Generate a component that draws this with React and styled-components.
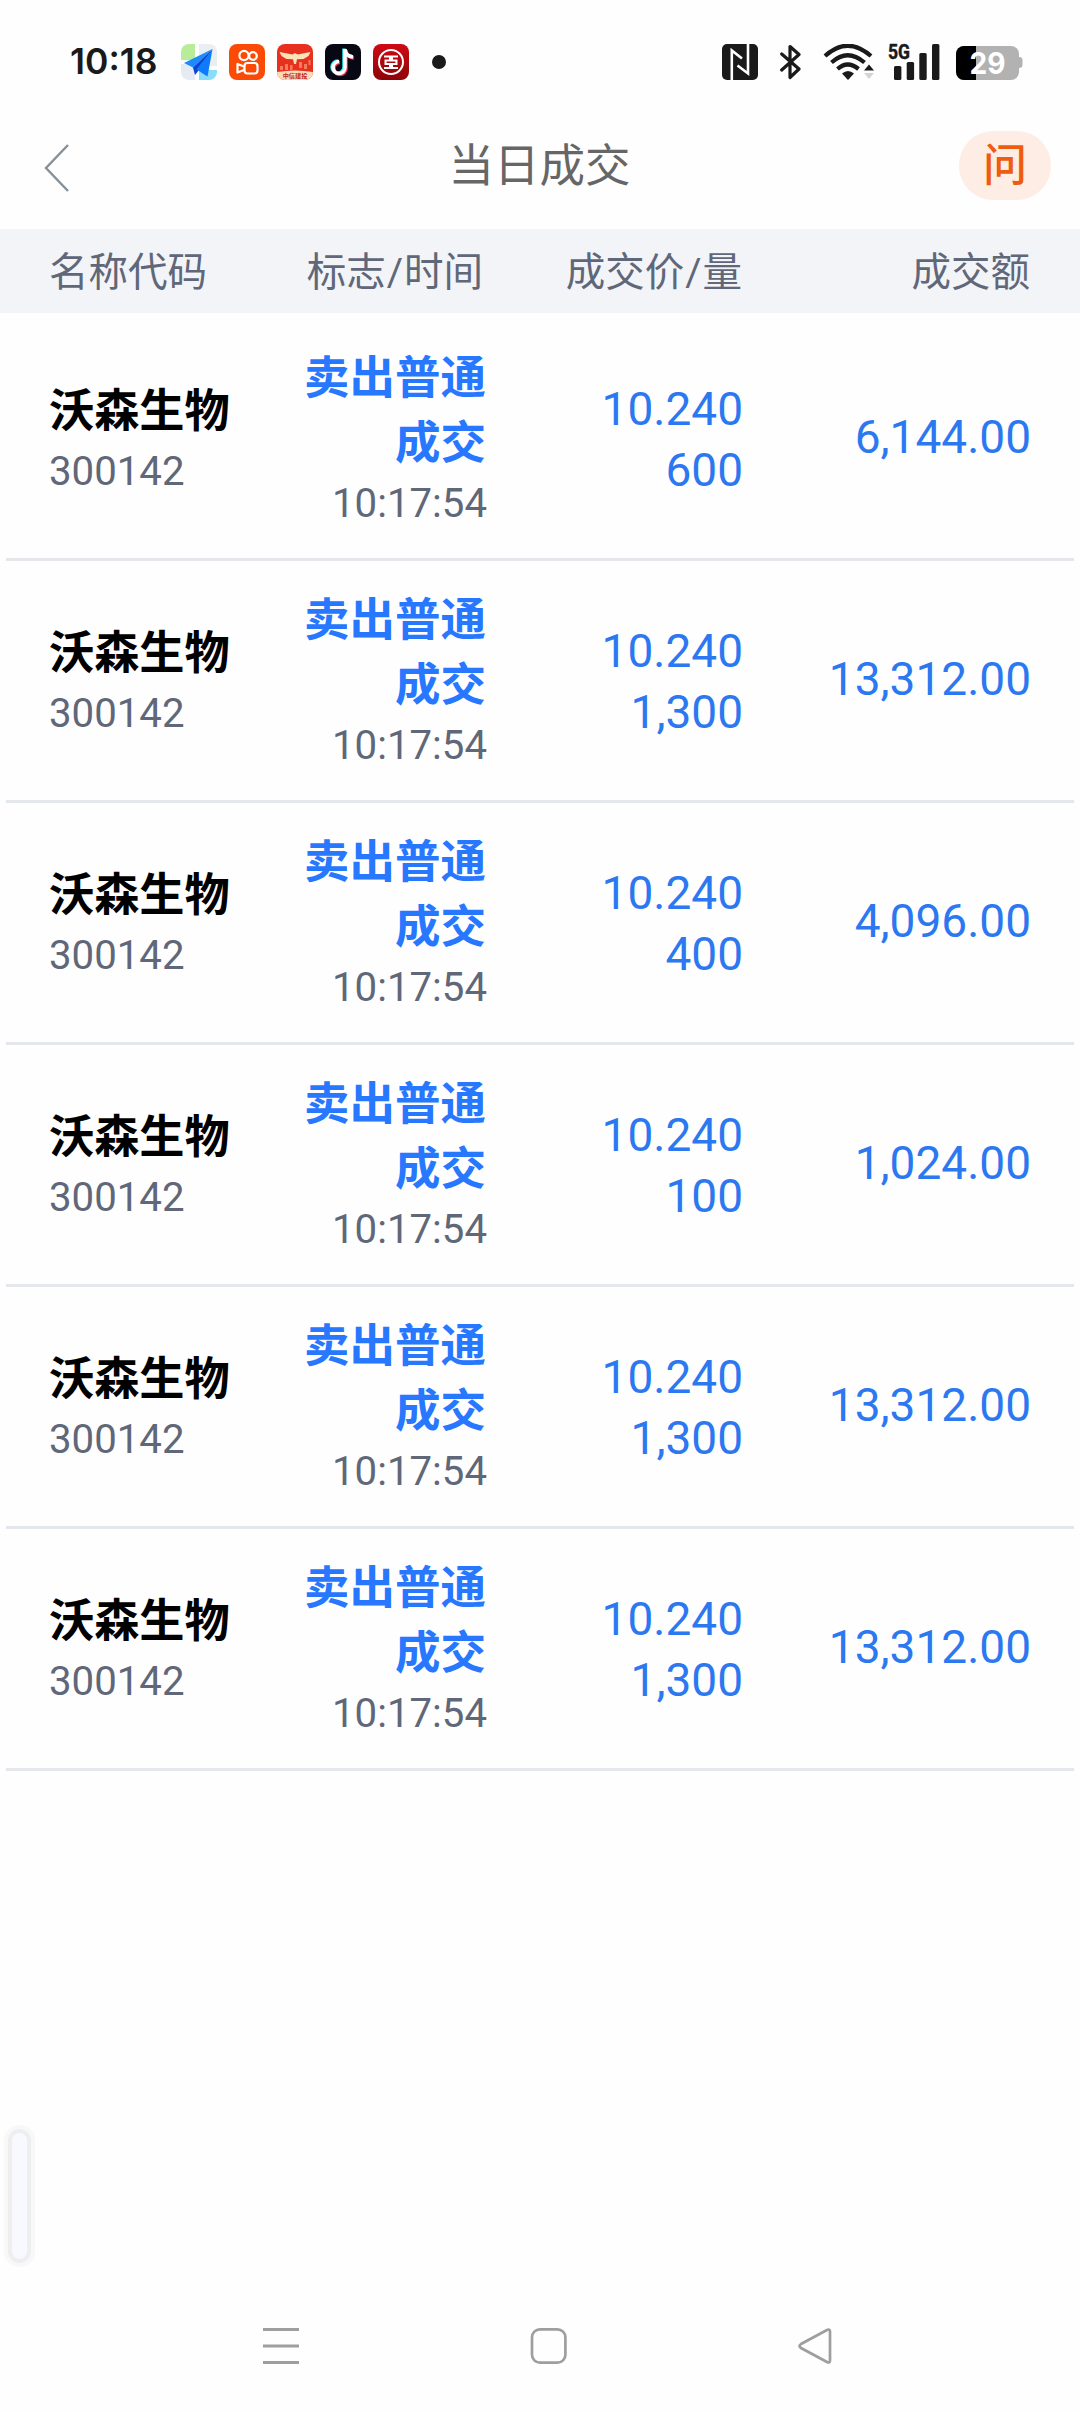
import styled, { createGlobalStyle, css } from "styled-components";

const GlobalStyle = createGlobalStyle`
  * {
    box-sizing: border-box;
  }

  body {
    margin: 0;
    background-color: #fefefe;
    font-family: Roboto, "Noto Sans CJK SC", sans-serif;
  }

  svg {
    display: block;
    flex-shrink: 0;
  }
`;

const Screen = styled.div`
  position: relative;
  display: flex;
  flex-direction: column;
  width: 1080px;
  height: 2412px;
  overflow: hidden;
  background-color: #fefefe;
`;

const StatusBar = styled.div`
  display: flex;
  align-items: center;
  height: 102px;
  padding: 22px 57px 0 70px;
`;

const Clock = styled.span`
  width: 111px;
  color: #1a1a1a;
  font-family: Inter, sans-serif;
  font-size: 35.5px;
  font-weight: 600;
  line-height: 36px;
  white-space: nowrap;
`;

const AppIcons = styled.div`
  display: flex;
  align-items: center;
  gap: 12px;
`;

const Dot = styled.span`
  width: 14px;
  height: 14px;
  margin-left: 11px;
  border-radius: 50%;
  background-color: #1a1a1a;
`;

const SystemIcons = styled.div`
  display: flex;
  align-items: center;
  margin-left: auto;
`;

const SystemIcon = styled.svg`
  margin-right: ${({ $gap }) => $gap || 0}px;
`;

const TitleBar = styled.header`
  display: grid;
  grid-template-columns: 200px 1fr 200px;
  align-items: center;
  height: 127px;
  padding: 0 29px 0 44px;
`;

const BackIcon = styled.svg`
  margin-top: 5px;
`;

const Title = styled.h1`
  margin: 0 0 0 -16px;
  padding-top: 3px;
  color: #666;
  font-size: 45.5px;
  font-weight: 400;
  line-height: 60px;
  text-align: center;
`;

const AskButton = styled.button`
  justify-self: end;
  width: 92px;
  height: 69px;
  padding: 0;
  border: none;
  border-radius: 34px;
  background-color: #feede5;
  color: #ee5c0f;
  font-family: inherit;
  font-size: 44px;
  font-weight: 500;
  line-height: 68px;
  text-align: center;
`;

const columns = css`
  display: grid;
  align-items: center;
`;

const TableHead = styled.div`
  ${columns}
  grid-template-columns: 234px 200px 259px 288px;
  height: 84px;
  padding: 3px 50px 0 49px;
  background-color: #f2f4f8;
  color: #5f6779;
  font-size: 39.5px;
  line-height: 81px;
`;

const HeadCell = styled.span`
  text-align: ${({ $left }) => ($left ? "left" : "right")};
  white-space: nowrap;
`;

const Slash = styled.span`
  margin: 0 1px;
`;

const TradeList = styled.div`
  padding: 6px 6px 0;
`;

const TradeRow = styled.div`
  ${columns}
  grid-template-columns: 238px 200px 256px 288px;
  height: 242px;
  padding: 0 43px;
  border-bottom: 3px solid #e4e7eb;
`;

const Cell = styled.div`
  display: flex;
  flex-direction: column;
  padding-top: ${({ $top }) => $top || 0}px;
  padding-bottom: ${({ $bottom }) => $bottom || 0}px;
  text-align: ${({ $left }) => ($left ? "left" : "right")};
`;

const StockName = styled.span`
  color: #000;
  font-size: 45.2px;
  font-weight: 700;
  line-height: 64px;
`;

const TradeType = styled.span`
  padding-right: 1px;
  color: #2878ff;
  font-size: 45.5px;
  font-weight: 700;
  line-height: 65px;
`;

const Muted = styled.span`
  color: #5f6779;
  font-size: 40.2px;
  line-height: 56px;
`;

const Amount = styled.span`
  color: #2b78f0;
  font-size: 46px;
  line-height: 61px;
`;

const SideHandle = styled.div`
  position: absolute;
  top: 2133px;
  left: 12px;
  width: 15px;
  height: 126px;
  border-radius: 8px;
  background-color: #f7f9ff;
  box-shadow: 0 0 0 4px #eeeeef, 0 0 0 8px #f8f8f8;
`;

const NavBar = styled.nav`
  display: flex;
  align-items: center;
  justify-content: space-between;
  height: 132px;
  margin-top: auto;
  padding: 0 245px 0 261px;
`;

const trades = [
  { price: "10.240", volume: "600", amount: "6,144.00" },
  { price: "10.240", volume: "1,300", amount: "13,312.00" },
  { price: "10.240", volume: "400", amount: "4,096.00" },
  { price: "10.240", volume: "100", amount: "1,024.00" },
  { price: "10.240", volume: "1,300", amount: "13,312.00" },
  { price: "10.240", volume: "1,300", amount: "13,312.00" },
];

function MapIcon() {
  return (
    <svg width="36" height="36" viewBox="0 0 36 36">
      <path d="M8 0h6v16H0V8a8 8 0 0 1 8-8z" fill="#b9ec98" />
      <path d="M18 0h10a8 8 0 0 1 8 8v14H18z" fill="#e9eef0" />
      <path d="M0 20h14v16H8a8 8 0 0 1-8-8z" fill="#e6eaf2" />
      <path d="M18 26h18v2a8 8 0 0 1-8 8H18z" fill="#8adcfb" />
      <path d="M31.500 5L3 19l9 4.500z" fill="#1a8cff" />
      <path d="M31.500 5L12 23.500l2 7.500 4-5z" fill="#0a45d6" />
      <path d="M31.500 5L15.500 25.500l11 7z" fill="#0f7bfa" />
    </svg>
  );
}

function CameraIcon() {
  return (
    <svg width="36" height="36" viewBox="0 0 36 36">
      <rect width="36" height="36" rx="8" fill="#fb4a06" />
      <g fill="none" stroke="#fff" strokeWidth="2.200">
        <circle cx="15" cy="11.500" r="4.600" />
        <circle cx="24" cy="12" r="3.800" />
        <rect x="15.500" y="19" width="13" height="10.500" rx="3" />
        <path d="M15 22.500l-6.500-2.500v8.500l6.500-2.500" strokeLinejoin="round" />
      </g>
    </svg>
  );
}

function BrokerIcon() {
  return (
    <svg width="36" height="36" viewBox="0 0 36 36">
      <defs>
        <clipPath id="broker">
          <rect width="36" height="36" rx="8" />
        </clipPath>
      </defs>
      <g clipPath="url(#broker)">
        <rect width="36" height="36" fill="#e8301f" />
        <path
          d="M3 22h3v4H3zM8 20h3v6H8zM13 21h2.500v5H13zM22 18h3v6h-3zM27 20h3v5h-3zM31.500 16h2v5h-2z"
          fill="#f27c5d"
        />
        <path
          d="M2.500 8l13 2.500L18 9l2.500 1.500L33.500 8l-2 4-5 3-6.500.300L19 20h-2l-1-4.700L9.500 15l-5-3z"
          fill="#fbe2b8"
        />
        <path d="M0 28q18-3 36 0v8H0z" fill="#fbdcb4" />
        <text
          x="18"
          y="34"
          textAnchor="middle"
          fontSize="6.200"
          fontWeight="700"
          fill="#c22a20"
        >
          中信建投
        </text>
      </g>
    </svg>
  );
}

function NoteIcon() {
  const note = "M20 5v18.500a6 6 0 1 1-6-6M20 5.500c.500 4 3.500 7 8 7.500";
  return (
    <svg width="36" height="36" viewBox="0 0 36 36">
      <rect width="36" height="36" rx="8" fill="#080814" />
      <g fill="none" strokeWidth="3.600">
        <path d={note} stroke="#25e8e4" transform="translate(-1 -.500)" />
        <path d={note} stroke="#fb2c54" transform="translate(1 1)" />
        <path d={note} stroke="#fff" />
      </g>
    </svg>
  );
}

function BankIcon() {
  return (
    <svg width="36" height="36" viewBox="0 0 36 36">
      <defs>
        <linearGradient id="bank" x1="0" y1="0" x2="0" y2="1">
          <stop offset="0" stopColor="#d00a14" />
          <stop offset="1" stopColor="#8d0309" />
        </linearGradient>
      </defs>
      <rect width="36" height="36" rx="8" fill="url(#bank)" />
      <g fill="none" stroke="#fff" strokeWidth="2">
        <circle cx="18" cy="18" r="12" />
        <path d="M11 12.500h6v4h-4.500v3.500H17v4h-6M25 12.500h-6v4h4.500v3.500H19v4h6" />
      </g>
    </svg>
  );
}

function NfcIcon() {
  return (
    <SystemIcon $gap={22} width="36" height="36" viewBox="0 0 36 36">
      <rect width="36" height="36" rx="5" fill="#1a1a1a" />
      <path
        d="M9.800 36V6.500L20 14.500M26 0v29.500L15.500 21.500"
        fill="none"
        stroke="#fff"
        strokeWidth="2.600"
      />
    </SystemIcon>
  );
}

function BluetoothIcon() {
  return (
    <SystemIcon $gap={22} width="21" height="36" viewBox="0 0 21 36">
      <path
        d="M1.700 10L19 25l-9 8.500V2.500l9 8L1.700 26"
        fill="none"
        stroke="#1a1a1a"
        strokeWidth="3.200"
        strokeLinecap="round"
        strokeLinejoin="round"
      />
    </SystemIcon>
  );
}

function WifiIcon() {
  return (
    <SystemIcon $gap={12} width="52" height="36" viewBox="0 0 52 36">
      <g fill="none" stroke="#1a1a1a" strokeWidth="4.200">
        <path d="M2 12q22.500-20.500 46 0" />
        <path d="M8.500 18.500q16-14.500 33 0" />
        <path d="M14.500 25q10-9 21 0" />
      </g>
      <path d="M19 29.500q6-5 12 0L25 36z" fill="#1a1a1a" />
      <path d="M46 20.500l5 6H41z" fill="#1a1a1a" />
      <path d="M46 35l5-6H41z" fill="#d4d4d4" />
    </SystemIcon>
  );
}

function SignalIcon() {
  return (
    <SystemIcon $gap={16} width="53" height="54" viewBox="0 -8 53 54">
      <text
        x="1"
        y="15.500"
        fontFamily="Roboto, sans-serif"
        fontSize="20.500"
        fontWeight="700"
        textLength="22"
        lengthAdjust="spacingAndGlyphs"
        fill="#1a1a1a"
        stroke="#1a1a1a"
        strokeWidth="0.500"
      >
        5G
      </text>
      <g fill="#1a1a1a">
        <rect x="7" y="23" width="7.400" height="14" rx="1.500" />
        <rect x="19.700" y="19" width="7.400" height="18" rx="1.500" />
        <rect x="32.300" y="10" width="7.400" height="27" rx="1.500" />
        <rect x="45" y="1" width="7.400" height="36" rx="1.500" />
      </g>
    </SystemIcon>
  );
}

function BatteryIcon() {
  return (
    <SystemIcon width="67" height="36" viewBox="0 0 67 36">
      <rect y="2" width="63" height="34" rx="8" fill="#b2b2b2" />
      <path d="M63 13q3.500 0 3.500 3v5q0 3-3.500 3z" fill="#b2b2b2" />
      <path d="M20 2v34H8a8 8 0 0 1-8-8V10a8 8 0 0 1 8-8z" fill="#000" />
      <text
        x="31.500"
        y="30"
        textAnchor="middle"
        fontFamily="Inter, sans-serif"
        fontSize="30"
        fontWeight="700"
        textLength="36"
        lengthAdjust="spacingAndGlyphs"
        fill="#fff"
      >
        29
      </text>
    </SystemIcon>
  );
}

function Trade({ price, volume, amount }) {
  return (
    <TradeRow>
      <Cell $left $top={2}>
        <StockName>沃森生物</StockName>
        <Muted>300142</Muted>
      </Cell>
      <Cell>
        <TradeType>卖出普通成交</TradeType>
        <Muted>10:17:54</Muted>
      </Cell>
      <Cell $top={2}>
        <Amount>{price}</Amount>
        <Amount>{volume}</Amount>
      </Cell>
      <Cell $bottom={2}>
        <Amount>{amount}</Amount>
      </Cell>
    </TradeRow>
  );
}

function App() {
  return (
    <Screen>
      <GlobalStyle />
      <StatusBar>
        <Clock>10:18</Clock>
        <AppIcons>
          <MapIcon />
          <CameraIcon />
          <BrokerIcon />
          <NoteIcon />
          <BankIcon />
          <Dot />
        </AppIcons>
        <SystemIcons>
          <NfcIcon />
          <BluetoothIcon />
          <WifiIcon />
          <SignalIcon />
          <BatteryIcon />
        </SystemIcons>
      </StatusBar>
      <TitleBar>
        <BackIcon width="26" height="48" viewBox="0 0 26 48">
          <path
            d="M24 1L2 24l22 23"
            fill="none"
            stroke="#869098"
            strokeWidth="2.400"
          />
        </BackIcon>
        <Title>当日成交</Title>
        <AskButton>问</AskButton>
      </TitleBar>
      <TableHead>
        <HeadCell $left>名称代码</HeadCell>
        <HeadCell>
          标志<Slash>/</Slash>时间
        </HeadCell>
        <HeadCell>
          成交价<Slash>/</Slash>量
        </HeadCell>
        <HeadCell>成交额</HeadCell>
      </TableHead>
      <TradeList>
        {trades.map((trade, index) => (
          <Trade key={index} {...trade} />
        ))}
      </TradeList>
      <SideHandle />
      <NavBar>
        <svg width="40" height="40" viewBox="0 0 40 40">
          <path
            d="M2 3.500h36M2 20h36M2 36.500h36"
            stroke="#9e9e9e"
            strokeWidth="3"
          />
        </svg>
        <svg width="40" height="40" viewBox="0 0 40 40">
          <rect
            x="4"
            y="3.300"
            width="33.400"
            height="33.400"
            rx="8"
            fill="none"
            stroke="#9e9e9e"
            strokeWidth="2.700"
          />
        </svg>
        <svg width="40" height="40" viewBox="0 0 40 40">
          <path
            d="M35 5.500v29q0 3-3 1.500L6 22q-3-2 0-4L32 4q3-1.500 3 1.500z"
            fill="none"
            stroke="#9e9e9e"
            strokeWidth="2.700"
          />
        </svg>
      </NavBar>
    </Screen>
  );
}

export default App;
